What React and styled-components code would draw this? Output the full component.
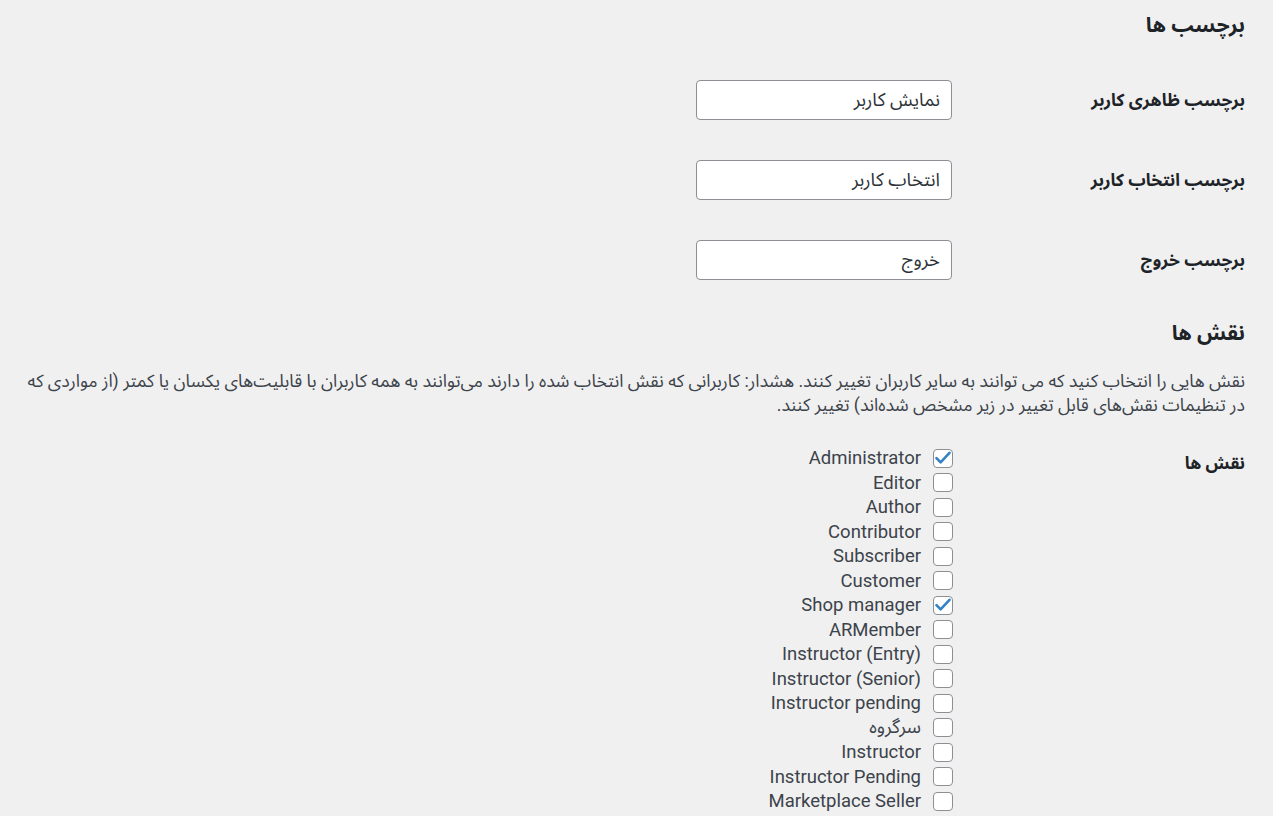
import styled, { createGlobalStyle } from "styled-components";

const GlobalStyle = createGlobalStyle`
    body {
        margin: 0;
        background: #f0f0f1;
        direction: rtl;
        font-family: Roboto, "Noto Sans Arabic", "DejaVu Sans", sans-serif;
        color: #3c434a;
    }
`

const Page = styled.div`
    padding: 11px 28px 0 12px;
`

const Title = styled.h2`
    margin: ${props => props.top}px 0 0;
    font-size: 21px;
    line-height: 28px;
    font-weight: 700;
    color: #1d2327;
`

const FormTable = styled.div`
    margin-top: 21px;
`

const Row = styled.div`
    display: flex;
    align-items: ${props => props.top ? "flex-start" : "center"};
    min-height: 80px;
    margin-top: ${props => props.gap || 0}px;
`

const Label = styled.div`
    width: 293px;
    flex-shrink: 0;
    font-size: 17.3px;
    line-height: 24px;
    font-weight: 700;
    color: #1d2327;
    padding-top: ${props => props.pad || 0}px;
`

const TextInput = styled.input`
    box-sizing: border-box;
    width: 256px;
    height: 40px;
    padding: 0 11px;
    border: 1px solid #8c8f94;
    border-radius: 4px;
    background: #fff;
    font-family: inherit;
    font-size: 18.5px;
    color: #2c3338;
    direction: rtl;
    outline: none;
`

const Description = styled.p`
    margin: 22px 0 0;
    font-size: 17.7px;
    line-height: 24px;
    color: #3c434a;
`

const RoleList = styled.div`
    display: flex;
    flex-direction: column;
    align-items: flex-start;
    margin-right: -1px;
`

const RoleItem = styled.label`
    display: flex;
    align-items: center;
    gap: 12px;
    height: 24.5px;
    font-size: 18.5px;
    color: #3c434a;
    white-space: nowrap;
`

const Box = styled.span`
    box-sizing: border-box;
    width: 20px;
    height: 19px;
    border: 1px solid #8c8f94;
    border-radius: 4px;
    background: #fff;
    display: flex;
    align-items: center;
    justify-content: center;
    flex-shrink: 0;
`

const roles = [
    { name: "Administrator", checked: true },
    { name: "Editor" },
    { name: "Author" },
    { name: "Contributor" },
    { name: "Subscriber" },
    { name: "Customer" },
    { name: "Shop manager", checked: true },
    { name: "ARMember" },
    { name: "Instructor (Entry)" },
    { name: "Instructor (Senior)" },
    { name: "Instructor pending" },
    { name: "سرگروه" },
    { name: "Instructor" },
    { name: "Instructor Pending" },
    { name: "Marketplace Seller" },
];

const Check = () => (
    <svg width="16" height="14" viewBox="0 0 16 14">
        <path d="M1.5 7.2 L5.6 11.4 L14.5 1.8" fill="none" stroke="#3582c4" strokeWidth="2.6" strokeLinecap="round" strokeLinejoin="round" />
    </svg>
)

const fields = [
    { label: "برچسب ظاهری کاربر", value: "نمایش کاربر" },
    { label: "برچسب انتخاب کاربر", value: "انتخاب کاربر" },
    { label: "برچسب خروج", value: "خروج" },
];

const App = () => {
    return (
        <Page>
            <GlobalStyle />
            <Title top={0}>برچسب ها</Title>
            <FormTable>
                {fields.map((f, index) => (
                    <Row key={index}>
                        <Label>{f.label}</Label>
                        <TextInput type="text" defaultValue={f.value} />
                    </Row>
                ))}
            </FormTable>
            <Title top={19}>نقش ها</Title>
            <Description>
                نقش هایی را انتخاب کنید که می توانند به سایر کاربران تغییر کنند. هشدار: کاربرانی که نقش انتخاب شده را دارند می‌توانند به همه کاربران با قابلیت‌های یکسان یا کمتر (از مواردی که
                <br />
                در تنظیمات نقش‌های قابل تغییر در زیر مشخص شده‌اند) تغییر کنند.
            </Description>
            <Row top gap={29}>
                <Label pad={5}>نقش ها</Label>
                <RoleList>
                    {roles.map((r, index) => (
                        <RoleItem key={index}>
                            <Box>{r.checked ? <Check /> : null}</Box>
                            <span>{r.name}</span>
                        </RoleItem>
                    ))}
                </RoleList>
            </Row>
        </Page>
    );
}

export default App;
